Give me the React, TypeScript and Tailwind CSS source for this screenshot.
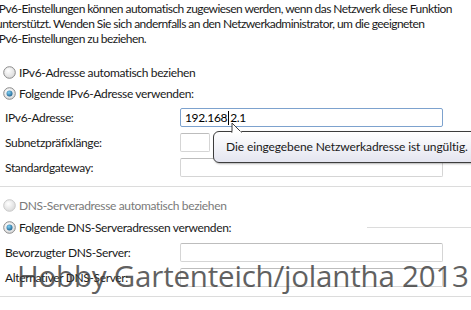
import React from "react";

function Radio({ checked, disabled }: { checked?: boolean; disabled?: boolean }) {
  return (
    <svg width="13" height="13" viewBox="0 0 13 13" className="shrink-0">
      <defs>
        <radialGradient id="rg" cx="0.4" cy="0.35" r="0.7">
          <stop offset="0" stopColor="#ffffff" />
          <stop offset="1" stopColor="#d8d8d8" />
        </radialGradient>
        <radialGradient id="dot" cx="0.4" cy="0.35" r="0.7">
          <stop offset="0" stopColor="#7fd0f5" />
          <stop offset="1" stopColor="#1c5f8c" />
        </radialGradient>
      </defs>
      <circle cx="6.5" cy="6.5" r="5.8" fill="url(#rg)" stroke={disabled ? "#c9c9c9" : "#8a8a8a"} strokeWidth="1" />
      {checked && <circle cx="6.5" cy="6.5" r="3" fill="url(#dot)" />}
    </svg>
  );
}

function Input({ w, focused, children }: { w: string; focused?: boolean; children?: React.ReactNode }) {
  return (
    <div
      className={`${w} h-[19px] border ${
        focused ? "border-[#7da2ce]" : "border-[#d5d5d5] border-t-[#bdbdbd]"
      } rounded-[2px] bg-white flex items-center pl-[4px]`}
    >
      {children}
    </div>
  );
}

export default function App() {
  return (
    <div
      className="relative w-[471px] h-[310px] overflow-hidden bg-white text-[12px] text-[#1a1a1a] whitespace-nowrap tracking-[-0.35px]"
      style={{ fontFamily: 'Lato, "Noto Sans", sans-serif' }}
    >
      <div className="ml-[-4px] pt-[1px] leading-[15px] text-[12px] tracking-[-0.55px]">
        <div>IPv6-Einstellungen können automatisch zugewiesen werden, wenn das Netzwerk diese Funktion</div>
        <div>unterstützt. Wenden Sie sich andernfalls an den Netzwerkadministrator, um die geeigneten</div>
        <div>IPv6-Einstellungen zu beziehen.</div>
      </div>

      <div className="mt-[16px] flex flex-col text-[12px]">
        <div className="h-[21px] flex items-center gap-[3px] pl-[3px]">
          <Radio />
          <span>IPv6-Adresse automatisch beziehen</span>
        </div>
        <div className="h-[21px] flex items-center gap-[3px] pl-[3px]">
          <Radio checked />
          <span>Folgende IPv6-Adresse verwenden:</span>
        </div>
        <div className="h-[25px] flex items-center pl-[5px] mt-[1px]">
          <span className="w-[175px]">IPv6-Adresse:</span>
          <Input w="w-[263px]" focused>
            <span className="text-[#000]">192.168</span>
            <span className="w-[1px] h-[14px] bg-black mx-[1px]" />
            <span className="text-[#000]">2.1</span>
          </Input>
        </div>
        <div className="h-[25px] flex items-center pl-[5px]">
          <span className="w-[175px]">Subnetzpräfixlänge:</span>
          <Input w="w-[30px]" />
        </div>
        <div className="h-[25px] flex items-center pl-[5px]">
          <span className="w-[175px]">Standardgateway:</span>
          <Input w="w-[263px]" />
        </div>
        <div className="h-[1px] bg-[#dcdcdc] mt-[6px]" />
        <div className="h-[21px] flex items-center gap-[3px] pl-[3px] mt-[8px] text-[#7a7a7a]">
          <Radio disabled />
          <span>DNS-Serveradresse automatisch beziehen</span>
        </div>
        <div className="h-[21px] flex items-center gap-[3px] pl-[3px] mt-[1px]">
          <Radio checked />
          <span>Folgende DNS-Serveradressen verwenden:</span>
          <div className="ml-auto w-[104px] h-[1px] bg-[#dcdcdc]" />
        </div>
        <div className="h-[25px] flex items-center pl-[5px] mt-[2px]">
          <span className="w-[175px]">Bevorzugter DNS-Server:</span>
          <Input w="w-[263px]" />
        </div>
        <div className="h-[25px] flex items-center pl-[5px]">
          <span className="w-[175px]">Alternativer DNS-Server:</span>
          <Input w="w-[263px]" />
        </div>
        <div className="h-[1px] bg-[#dcdcdc] mt-[6px]" />
      </div>

      {/* tooltip */}
      <div className="absolute left-[213px] top-[131px] w-[270px] h-[32px] rounded-[6px] border border-[#3c3c3c] bg-gradient-to-b from-white to-[#e4e5f0] flex items-center pl-[12px] text-[12px] tracking-[-0.1px] text-[#1a1a1a] shadow-[1px_1px_2px_rgba(0,0,0,0.3)]">
        Die eingegebene Netzwerkadresse ist ungültig.
      </div>
      <svg className="absolute left-[226px] top-[122px]" width="24" height="11" viewBox="0 0 24 11">
        <path d="M6 11 L6 1 L16 11" fill="#ffffff" stroke="#3c3c3c" strokeWidth="1" />
        <rect x="6.5" y="9.5" width="9" height="2" fill="#ffffff" />
      </svg>

      {/* watermark */}
      <div
        className="absolute left-[17px] top-[257px] text-[29.5px] leading-[38px] text-[#3a3a3a] opacity-80 whitespace-nowrap tracking-[-0.2px]"
        style={{ fontFamily: '"Open Sans", sans-serif' }}
      >
        Hobby Gartenteich/jolantha 2013
      </div>
    </div>
  );
}
